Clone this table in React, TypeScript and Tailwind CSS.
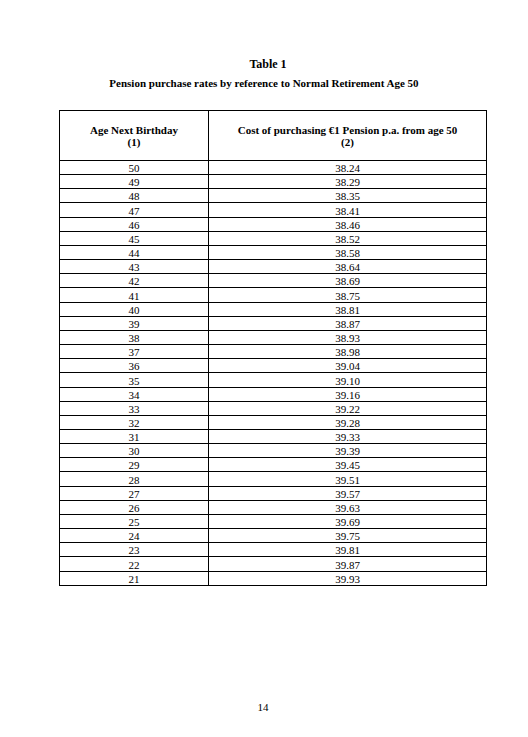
import React from "react";

const rows: [number, string][] = [
  [50, "38.24"], [49, "38.29"], [48, "38.35"], [47, "38.41"], [46, "38.46"],
  [45, "38.52"], [44, "38.58"], [43, "38.64"], [42, "38.69"], [41, "38.75"],
  [40, "38.81"], [39, "38.87"], [38, "38.93"], [37, "38.98"], [36, "39.04"],
  [35, "39.10"], [34, "39.16"], [33, "39.22"], [32, "39.28"], [31, "39.33"],
  [30, "39.39"], [29, "39.45"], [28, "39.51"], [27, "39.57"], [26, "39.63"],
  [25, "39.69"], [24, "39.75"], [23, "39.81"], [22, "39.87"], [21, "39.93"],
];

export default function App() {
  return (
    <div className="w-[528px] h-[737px] bg-white text-black font-['Liberation_Serif',serif] flex flex-col">
      <div className="mt-[57px] text-center text-[12px] font-bold leading-[14px] pl-[8px]">Table 1</div>
      <div className="mt-[5px] text-center text-[11px] font-bold leading-[14px]">
        Pension purchase rates by reference to Normal Retirement Age 50
      </div>
      <div className="ml-[59px] mt-[20px] w-[428px]">
        <table className="w-full border-collapse table-fixed">
          <colgroup>
            <col className="w-[149px]" />
            <col />
          </colgroup>
          <thead>
            <tr className="h-[50px]">
              <th className="border border-black text-[11px] font-bold leading-[12px] align-middle">
                Age Next Birthday
                <br />
                (1)
              </th>
              <th className="border border-black text-[11px] font-bold leading-[12px] align-middle">
                Cost of purchasing €1 Pension p.a. from age 50
                <br />
                (2)
              </th>
            </tr>
          </thead>
          <tbody>
            {rows.map(([age, cost]) => (
              <tr key={age} className="h-[14.17px]">
                <td className="border border-black text-center text-[11px] leading-[12px] p-0 align-bottom">{age}</td>
                <td className="border border-black text-center text-[11px] leading-[12px] p-0 align-bottom">{cost}</td>
              </tr>
            ))}
          </tbody>
        </table>
      </div>
      <div className="mt-auto mb-[24px] text-center text-[11px] leading-[12px] pr-[2px]">14</div>
    </div>
  );
}
